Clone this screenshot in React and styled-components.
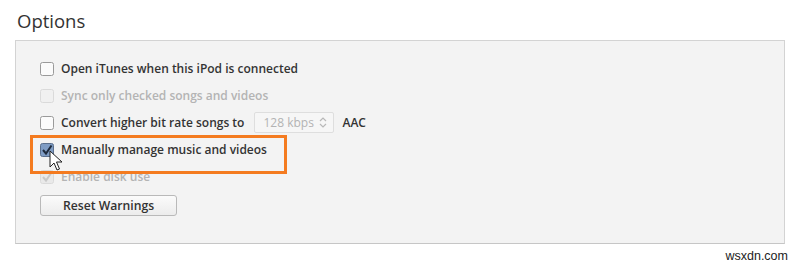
import React from 'react'
import styled, { createGlobalStyle } from 'styled-components'

const Global = createGlobalStyle`
  html, body {
    margin: 0;
    padding: 0;
    background: #ffffff;
  }
  body {
    width: 800px;
    height: 266px;
    overflow: hidden;
    font-family: "Open Sans", "Noto Sans", sans-serif;
  }
`

const Page = styled.div`
  position: relative;
  width: 800px;
  height: 266px;
  padding: 8px 15px 0 15px;
  box-sizing: border-box;
`

const Title = styled.h2`
  margin: 0 0 0 2px;
  font-size: 18.5px;
  font-weight: 400;
  color: #333;
  line-height: 26px;
  height: 32px;
`

const Panel = styled.div`
  position: relative;
  box-sizing: border-box;
  height: 204px;
  background: #f3f3f3;
  border: 1px solid #d3d3d3;
  border-bottom-color: #c6c6c6;
  padding: 14px 24px 0 24px;
`

const Row = styled.div`
  display: flex;
  align-items: center;
  height: 27px;
  gap: 7px;
  font-size: 12px;
  font-weight: 600;
  color: ${p => (p.$disabled ? '#b4b4b4' : '#333')};
`

const Label = styled.span`
  white-space: nowrap;
`

const Select = styled.div`
  display: flex;
  align-items: center;
  justify-content: space-between;
  box-sizing: border-box;
  width: 80px;
  height: 21px;
  margin-left: 3px;
  padding: 0 6px 0 8px;
  background: #f6f6f6;
  border: 1px solid #dedede;
  border-radius: 2px;
  color: #b3b3b3;
  font-weight: 400;
`

const Unit = styled.span`
  margin-left: 1px;
`

const Button = styled.button`
  margin-top: 5px;
  width: 137px;
  height: 21px;
  padding: 0;
  font-family: inherit;
  font-size: 12.2px;
  font-weight: 600;
  color: #333;
  background: linear-gradient(#fbfbfb, #ececec);
  border: 1px solid #b9b9b9;
  border-radius: 3px;
`

const Highlight = styled.div`
  position: absolute;
  left: 14px;
  top: 94px;
  width: 257px;
  height: 39px;
  box-sizing: border-box;
  border: 3px solid #f47b20;
  pointer-events: none;
`

const Cursor = styled.svg`
  position: absolute;
  left: 33px;
  top: 109px;
`

const Watermark = styled.div`
  position: absolute;
  right: 12px;
  bottom: 3px;
  font-family: "Liberation Sans", Arial, sans-serif;
  font-size: 12.5px;
  color: #222;
`

const Box = ({ checked, disabled }) => (
  <svg width="14" height="14" viewBox="0 0 14 14">
    <rect
      x="0.5"
      y="0.5"
      width="13"
      height="13"
      rx="2"
      fill={checked ? (disabled ? '#e9e9e9' : '#7f9cc4') : disabled ? '#f0f0f0' : '#fbfbfb'}
      stroke={disabled ? '#dadada' : checked ? '#5b6f8c' : '#9a9a9a'}
    />
    {checked && (
      <path
        d="M3 7 L6 10.5 L11.5 2.5"
        fill="none"
        stroke={disabled ? '#c8c8c8' : '#1f2b3d'}
        strokeWidth="2"
      />
    )}
  </svg>
)

const Chevrons = () => (
  <svg width="8" height="11" viewBox="0 0 8 11">
    <path d="M1 4 L4 1 L7 4 M1 7 L4 10 L7 7" fill="none" stroke="#b8b8b8" strokeWidth="1.2" />
  </svg>
)

export default function App() {
  return (
    <>
      <Global />
      <Page>
        <Title>Options</Title>
        <Panel>
          <Row>
            <Box />
            <Label>Open iTunes when this iPod is connected</Label>
          </Row>
          <Row $disabled>
            <Box disabled />
            <Label>Sync only checked songs and videos</Label>
          </Row>
          <Row>
            <Box />
            <Label>Convert higher bit rate songs to</Label>
            <Select>
              <span>128 kbps</span>
              <Chevrons />
            </Select>
            <Unit>AAC</Unit>
          </Row>
          <Row>
            <Box checked />
            <Label>Manually manage music and videos</Label>
          </Row>
          <Row $disabled>
            <Box checked disabled />
            <Label>Enable disk use</Label>
          </Row>
          <Button>Reset Warnings</Button>
          <Highlight />
          <Cursor width="14" height="22" viewBox="0 0 14 22">
            <path
              d="M1 1 L1 17 L5 13 L8 20 L10.5 19 L7.5 12 L13 12 Z"
              fill="#ffffff"
              stroke="#222"
              strokeWidth="1"
              strokeLinejoin="round"
            />
          </Cursor>
        </Panel>
        <Watermark>wsxdn.com</Watermark>
      </Page>
    </>
  )
}
